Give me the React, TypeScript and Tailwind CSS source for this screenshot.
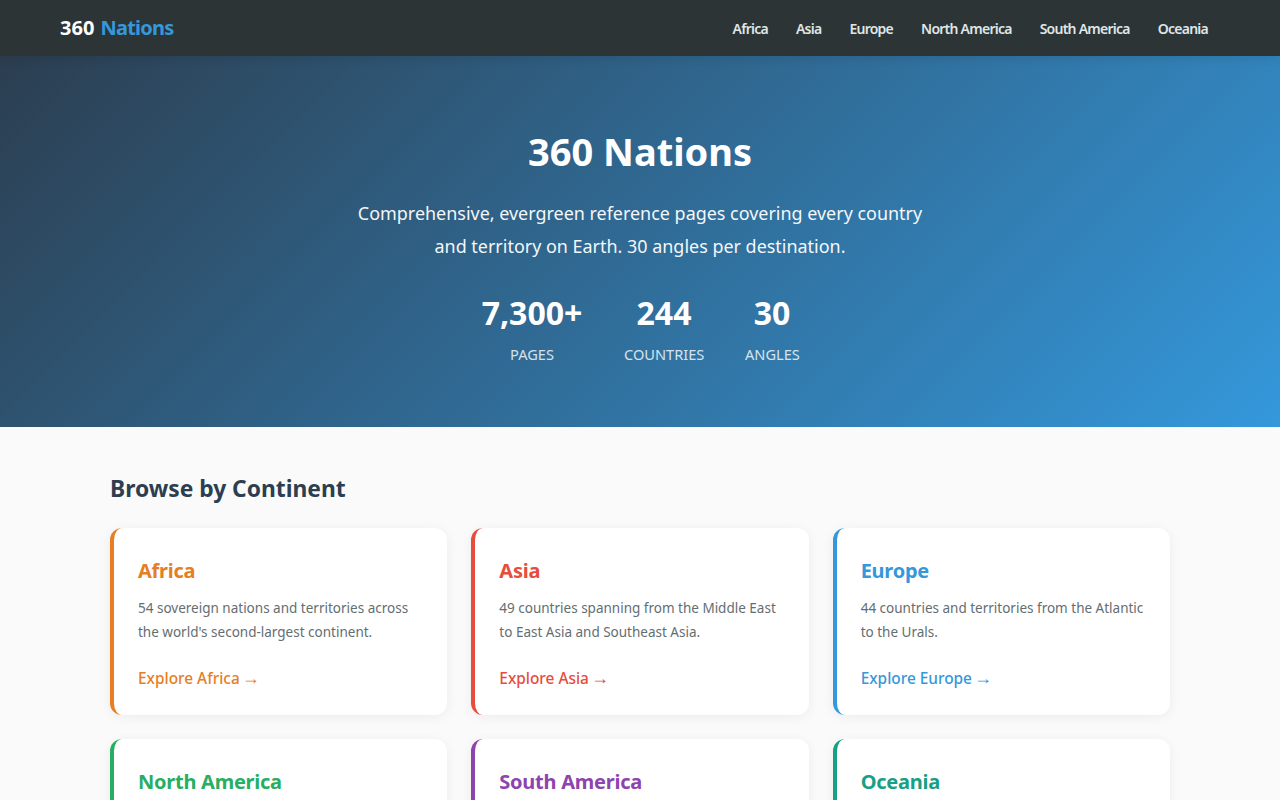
const continents = [
  { name: "Africa", desc: "54 sovereign nations and territories across the world's second-largest continent.", border: "border-[#e67e22]", text: "text-[#e67e22]" },
  { name: "Asia", desc: "49 countries spanning from the Middle East to East Asia and Southeast Asia.", border: "border-[#e74c3c]", text: "text-[#e74c3c]" },
  { name: "Europe", desc: "44 countries and territories from the Atlantic to the Urals.", border: "border-[#3498db]", text: "text-[#3498db]" },
  { name: "North America", desc: "23 countries from Canada to Panama and across the Caribbean islands.", border: "border-[#27ae60]", text: "text-[#27ae60]" },
  { name: "South America", desc: "12 sovereign nations from the Andes to the Amazon and Patagonia.", border: "border-[#8e44ad]", text: "text-[#8e44ad]" },
  { name: "Oceania", desc: "14 nations and territories across Australia and the Pacific Islands.", border: "border-[#16a085]", text: "text-[#16a085]" },
]

const navLinks = ["Africa", "Asia", "Europe", "North America", "South America", "Oceania"]

const stats = [
  { value: "7,300+", label: "PAGES", width: "w-[102px]" },
  { value: "244", label: "COUNTRIES", width: "w-[80px]" },
  { value: "30", label: "ANGLES", width: "w-[54px]" },
]

export default function App() {
  return (
    <div className="min-h-screen bg-[#fafafa] font-['Noto_Sans',sans-serif]">
      <header className="relative z-10 flex h-14 items-center justify-between bg-[#2d3436] px-[60px] shadow-[0_2px_10px_rgba(0,0,0,0.1)]">
        <a className="text-[20px] font-bold text-white">
          360 <span className="ml-[1px] tracking-[-0.8px] text-[#3498db]">Nations</span>
        </a>
        <nav className="flex gap-7 pr-3">
          {navLinks.map((link) => (
            <a key={link} className="text-[14px] font-semibold tracking-[-0.75px] text-[#dfe6e9]">
              {link}
            </a>
          ))}
        </nav>
      </header>

      <section className="h-[371px] bg-[linear-gradient(135deg,#2c3e50,#3498db)] pt-[67px] text-center text-white">
        <h1 className="text-[38px] leading-[56px] font-bold">360 Nations</h1>
        <p className="mx-auto mt-[18px] max-w-[600px] text-[17.95px] leading-[33px] opacity-95">
          Comprehensive, evergreen reference pages covering every country and territory on Earth. 30 angles per destination.
        </p>
        <div className="mt-[26px] flex justify-center gap-[41px]">
          {stats.map((stat) => (
            <div key={stat.label} className={stat.width}>
              <div className="text-[32px] leading-[48px] font-bold">{stat.value}</div>
              <div className="mt-[7px] text-[14.6px] leading-[21px] whitespace-nowrap opacity-80">{stat.label}</div>
            </div>
          ))}
        </div>
      </section>

      <main className="mx-auto max-w-[1100px] px-5 pt-[44px] pb-10">
        <h2 className="mb-[21px] text-[22.8px] leading-[36px] font-bold text-[#2c3e50]">Browse by Continent</h2>
        <div className="grid grid-cols-3 gap-6">
          {continents.map((c) => (
            <div key={c.name} className={`h-[187px] rounded-xl border-l-4 bg-white py-6 pr-6 pl-6 shadow-[0_2px_12px_rgba(0,0,0,0.06)] ${c.border}`}>
              <h3 className={`text-[20px] leading-[38px] font-bold tracking-[-0.25px] ${c.text}`}>{c.name}</h3>
              <p className="mt-[6px] text-[13.5px] leading-[24px] text-[#636e72]">{c.desc}</p>
              <a className={`mt-[24px] block text-[15.4px] leading-[22px] font-medium ${c.text}`}>
                Explore {c.name} <span className="-ml-[2px] font-['Liberation_Sans'] text-[18px] leading-none">→</span>
              </a>
            </div>
          ))}
        </div>
      </main>
    </div>
  )
}
